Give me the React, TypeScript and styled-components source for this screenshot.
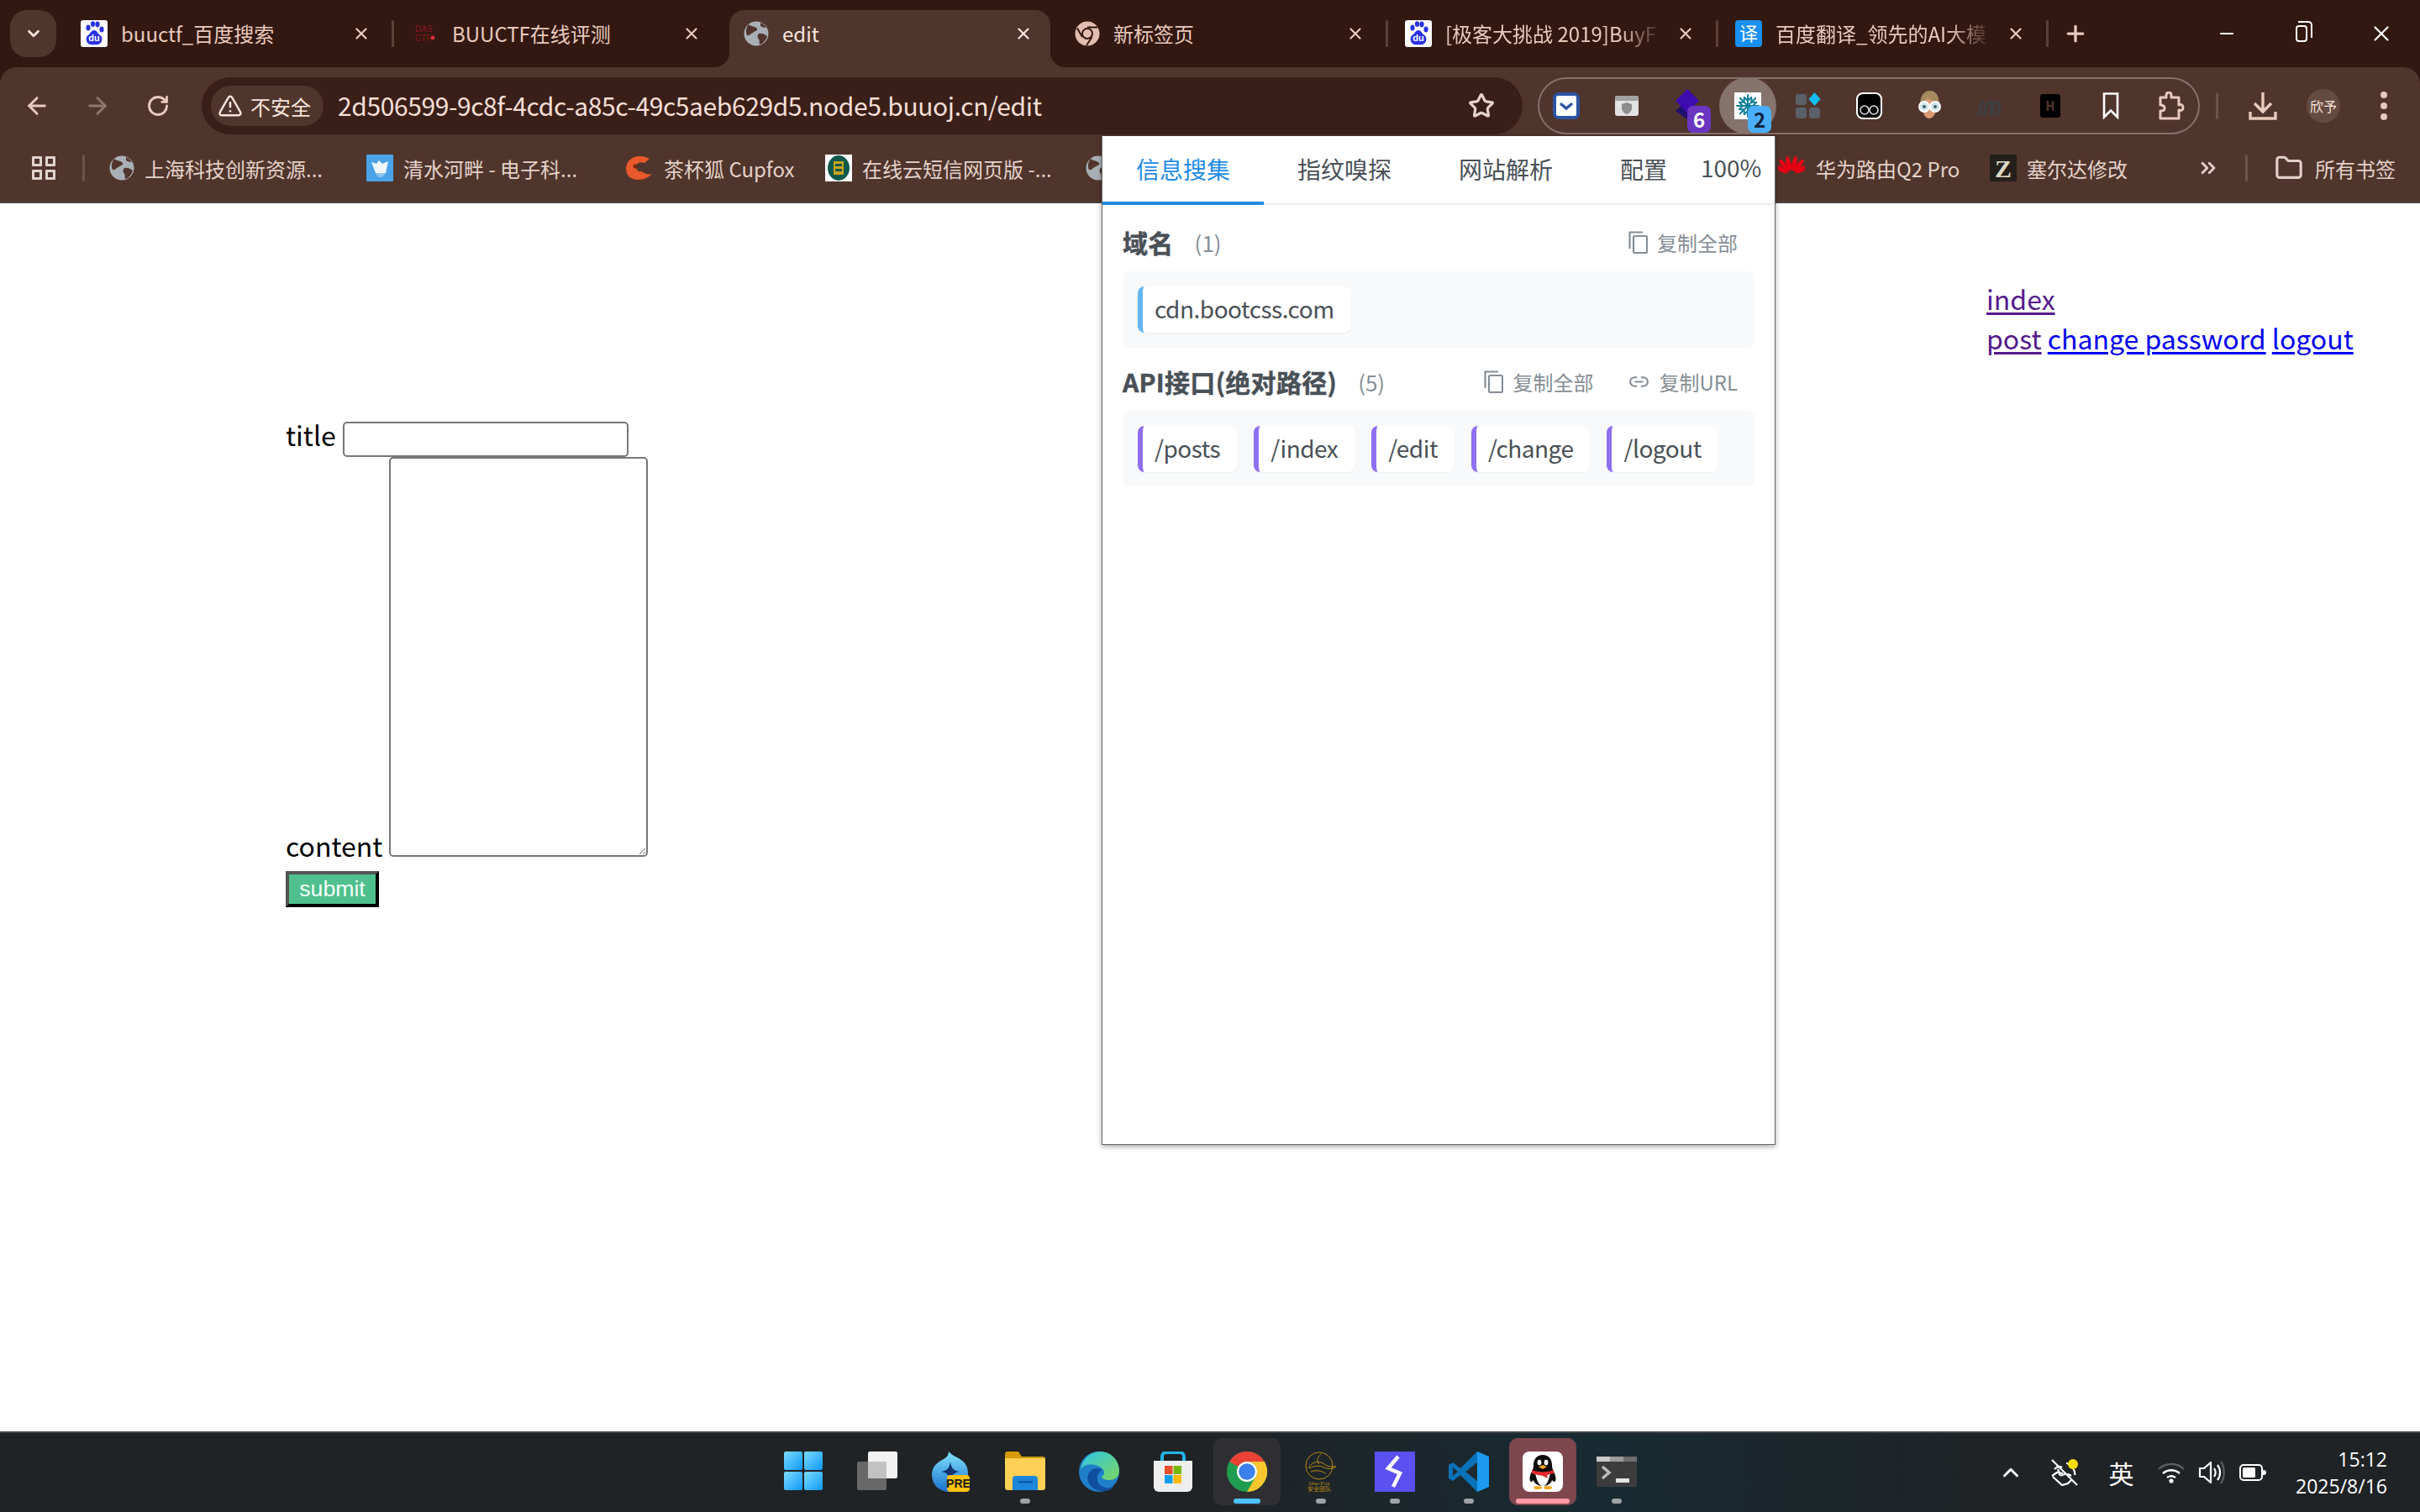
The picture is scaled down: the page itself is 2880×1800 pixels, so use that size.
import React from 'react';
import styled, { createGlobalStyle } from 'styled-components';
import {
  ArrowLeft, ArrowRight, RotateCw, TriangleAlert, Star, ChevronDown, ChevronUp,
  X, Plus, Minus, ChevronsRight, Folder, Link2,
} from 'lucide-react';

const CJK = '"Noto Sans CJK SC", "Noto Sans", sans-serif';
const STRIP = '#321810';
const BAR = '#50352d';
const INK = '#e9cabd';

const GlobalStyle = createGlobalStyle`
  html, body { margin: 0; padding: 0; background: #fff; }
  body { font-family: ${CJK}; }
  * { box-sizing: border-box; }
`;

const Screen = styled.div`
  position: relative;
  width: 2880px;
  height: 1800px;
  display: flex;
  flex-direction: column;
  overflow: hidden;
`;

/* ---------- tab strip ---------- */
const TabStrip = styled.div`
  height: 80px;
  flex: none;
  display: flex;
  background: ${STRIP};
  padding-left: 12px;
`;
const TabMenu = styled.div`
  width: 55px;
  height: 56px;
  margin: 12px 5px 0 0;
  border-radius: 20px;
  background: ${BAR};
  color: #f4e3dc;
  display: flex;
  align-items: center;
  justify-content: center;
`;
const Tab = styled.div<{ $active?: boolean; $sep?: boolean }>`
  position: relative;
  width: 393px;
  height: 68px;
  margin-top: 12px;
  padding: 0 24px 12px 24px;
  display: flex;
  align-items: center;
  gap: 16px;
  color: ${(p) => (p.$active ? '#f7e6de' : INK)};
  font-size: 24px;
  border-radius: 18px 18px 0 0;
  background: ${(p) => (p.$active ? BAR : 'transparent')};
  ${(p) => p.$active && `
    margin-left: 10px;
    margin-right: 5px;
    width: 382px;
    padding-left: 17px;
    padding-right: 21px;
    &::before, &::after {
      content: '';
      position: absolute;
      bottom: 0;
      width: 18px;
      height: 18px;
    }
    &::before { left: -18px; background: radial-gradient(circle at 0 0, transparent 18px, ${BAR} 18.5px); }
    &::after { right: -18px; background: radial-gradient(circle at 100% 0, transparent 18px, ${BAR} 18.5px); }
  `}
  ${(p) => p.$sep && `
    &::after {
      content: '';
      position: absolute;
      right: -4px;
      top: 12px;
      width: 3px;
      height: 32px;
      border-radius: 2px;
      background: #5c4138;
    }
  `}
`;
const TabTitle = styled.span<{ $fade?: boolean }>`
  flex: 1;
  min-width: 0;
  white-space: nowrap;
  margin-top: -2px;
  ${(p) => p.$fade && `
    -webkit-mask-image: linear-gradient(to right, #000 80%, transparent 100%);
    mask-image: linear-gradient(to right, #000 80%, transparent 100%);
  `}
`;
const TabClose = styled.span`
  flex: none;
  width: 24px;
  margin-right: -1px;
  display: flex;
  justify-content: center;
`;
const NewTab = styled.div`
  width: 72px;
  margin-top: 12px;
  height: 56px;
  display: flex;
  align-items: center;
  justify-content: center;
  color: ${INK};
`;
const WindowControls = styled.div`
  margin-left: auto;
  display: flex;
  height: 56px;
  margin-top: 12px;
  color: #fff;
`;
const WinButton = styled.div`
  width: 92px;
  display: flex;
  align-items: center;
  justify-content: center;
`;
const RestoreGlyph = styled.span`
  position: relative;
  left: -3px;
  width: 14px;
  height: 20px;
  border: 2px solid #fff;
  border-radius: 4px;
  &::after {
    content: '';
    position: absolute;
    top: -7px;
    left: 1px;
    width: 15px;
    height: 18px;
    border-top: 2px solid #fff;
    border-right: 2px solid #fff;
    border-radius: 0 5px 0 0;
  }
`;

/* ---------- toolbar ---------- */
const ChromeBody = styled.div`
  background: ${STRIP};
  flex: none;
`;
const Toolbar = styled.div`
  height: 80px;
  background: ${BAR};
  border-radius: 20px 20px 0 0;
  display: flex;
  align-items: flex-start;
  padding: 12px 0 0 8px;
`;
const NavButton = styled.div<{ $dim?: boolean }>`
  width: 72px;
  height: 68px;
  display: flex;
  align-items: center;
  justify-content: center;
  color: ${(p) => (p.$dim ? '#8f766b' : INK)};
`;
const Omnibox = styled.div`
  width: 1572px;
  height: 68px;
  margin-left: 16px;
  border-radius: 34px;
  background: #3a1f18;
  display: flex;
  align-items: center;
  padding: 0 33px 0 11px;
`;
const SecurityChip = styled.div`
  width: 134px;
  height: 48px;
  flex: none;
  border-radius: 24px;
  background: ${BAR};
  display: flex;
  align-items: center;
  gap: 9px;
  padding-left: 8px;
  color: #f7e6de;
  font-size: 24px;
`;
const UrlText = styled.span`
  margin: -3px 0 0 17px;
  color: #f4dfd6;
  font-size: 30px;
  letter-spacing: -0.4px;
  white-space: nowrap;
  flex: 1;
`;
const ExtensionPill = styled.div`
  width: 788px;
  height: 68px;
  margin-left: 18px;
  border-radius: 34px;
  box-shadow: inset 0 0 0 2px #85726b;
  display: flex;
  gap: 4px;
`;
const ExtSlot = styled.div<{ $on?: boolean }>`
  position: relative;
  width: 68px;
  height: 68px;
  border-radius: 50%;
  background: ${(p) => (p.$on ? '#85736c' : 'transparent')};
  display: flex;
  align-items: center;
  justify-content: center;
  color: ${INK};
`;
const ExtBadge = styled.span<{ $bg: string; $fg: string }>`
  position: absolute;
  left: 34px;
  top: 34px;
  width: 28px;
  height: 32px;
  border-radius: 7px;
  background: ${(p) => p.$bg};
  color: ${(p) => p.$fg};
  font: 700 24px/31px ${CJK};
  text-align: center;
`;
const ToolbarRule = styled.span`
  width: 3px;
  height: 32px;
  margin: 18px 17px 0 19px;
  background: #6e5349;
  border-radius: 2px;
`;
const ToolButton = styled.div`
  width: 72px;
  height: 68px;
  display: flex;
  align-items: center;
  justify-content: center;
  color: ${INK};
`;
const ProfileBadge = styled.div`
  width: 40px;
  height: 40px;
  border-radius: 50%;
  background: #644a41;
  color: #f7e6de;
  font-size: 16px;
  display: flex;
  align-items: center;
  justify-content: center;
`;

/* ---------- bookmarks ---------- */
const BookmarkBar = styled.div`
  height: 82px;
  flex: none;
  background: ${BAR};
  border-bottom: 2px solid #4a4644;
  display: flex;
  align-items: center;
  padding: 0 28px 0 38px;
  color: #e4d2ca;
  font-size: 24px;
`;
const AppsGrid = styled.div`
  width: 28px;
  height: 28px;
  display: grid;
  grid-template-columns: 12px 12px;
  gap: 4px;
  & > i {
    border: 3px solid #e0d2cc;
    border-radius: 1px;
  }
`;
const BarRule = styled.span<{ $l: number; $r: number }>`
  width: 3px;
  height: 32px;
  margin: 0 ${(p) => p.$r}px 0 ${(p) => p.$l}px;
  background: #6e5349;
  border-radius: 2px;
`;
const BookmarkItem = styled.div<{ $w: number; $gap?: number }>`
  width: ${(p) => p.$w}px;
  flex: none;
  display: flex;
  align-items: center;
  gap: ${(p) => p.$gap ?? 12}px;
  white-space: nowrap;
`;
const BarRight = styled.div`
  margin-left: auto;
  display: flex;
  align-items: center;
`;

/* ---------- page ---------- */
const Page = styled.div`
  flex: 1;
  min-height: 0;
  display: flex;
  justify-content: space-between;
  background: #fff;
  color: #000;
  font-size: 32px;
`;
const PostForm = styled.form`
  padding: 252px 0 0 340px;
  line-height: 46px;
`;
const FormRow = styled.div`
  white-space: nowrap;
`;
const FieldLabel = styled.label`
  margin-right: 8px;
`;
const TitleInput = styled.input`
  width: 340px;
  height: 42px;
  padding: 2px 4px;
  border: 2px solid #767676;
  border-radius: 5px;
  background: #fff;
  font: 26.67px "Liberation Sans", Arial, sans-serif;
  outline: none;
`;
const ContentArea = styled.textarea`
  width: 308px;
  height: 476px;
  border: 2px solid #767676;
  border-radius: 5px;
  outline: none;
  display: inline-block;
`;
const SubmitButton = styled.button`
  display: block;
  margin-top: 8px;
  width: 111px;
  height: 43px;
  padding: 0;
  border: 4px outset #000;
  background: #4fc08d;
  color: #f4fff9;
  font: 26.67px/1 "Liberation Sans", Arial, sans-serif;
`;
const TopLinks = styled.div`
  padding: 90px 60px 0 0;
  width: 516px;
  line-height: 47px;
`;
const PageLink = styled.a<{ $seen?: boolean }>`
  color: ${(p) => (p.$seen ? '#551a8b' : '#0000ee')};
  text-decoration: underline;
  text-decoration-thickness: 3px;
  text-underline-offset: 3px;
`;

/* ---------- popup ---------- */
const Popup = styled.div`
  position: absolute;
  left: 1311px;
  top: 162px;
  width: 802px;
  height: 1201px;
  background: #fff;
  border: 1px solid #666;
  border-top: none;
  box-shadow: 0 2px 6px rgba(0, 0, 0, 0.35);
  color: #495057;
  font-family: ${CJK};
`;
const PopupTabs = styled.div`
  height: 82px;
  display: flex;
  border-bottom: 2px solid #e9ecef;
`;
const PopupTab = styled.div<{ $active?: boolean; $w: number }>`
  width: ${(p) => p.$w}px;
  height: 82px;
  padding-top: 18px;
  text-align: center;
  font-size: 28px;
  line-height: 42px;
  color: ${(p) => (p.$active ? '#228be6' : '#495057')};
  border-bottom: 4px solid ${(p) => (p.$active ? '#228be6' : 'transparent')};
`;
const ZoomLevel = styled.div`
  font-size: 28px;
  line-height: 42px;
  padding-top: 16px;
  color: #495057;
`;
const PopupBody = styled.div`
  padding: 24px 24px 0;
`;
const SectionHead = styled.div`
  height: 44px;
  padding-bottom: 4px;
  display: flex;
  align-items: center;
`;
const SectionTitle = styled.h3`
  margin: 0;
  font-size: 30px;
  font-weight: 700;
  letter-spacing: 0.3px;
  color: #495057;
  -webkit-text-stroke: 0.5px #495057;
`;
const SectionCount = styled.span`
  margin-left: 25px;
  font-size: 26px;
  color: #868e96;
`;
const HeadActions = styled.div`
  margin-left: auto;
  display: flex;
  gap: 42px;
  padding-right: 20px;
`;
const CopyAction = styled.span`
  display: flex;
  align-items: center;
  gap: 11px;
  font-size: 24px;
  color: #868e96;
`;
const ChipBox = styled.div`
  height: 91px;
  margin: 11px 0 20px;
  padding: 18px;
  background: #f8f9fa;
  border-radius: 8px;
  display: flex;
  gap: 20px;
`;
const Chip = styled.span<{ $accent: string }>`
  height: 55px;
  padding: 0 20px 0 14px;
  background: #fff;
  border-left: 6px solid ${(p) => p.$accent};
  border-radius: 8px;
  box-shadow: 0 1px 2px rgba(0, 0, 0, 0.05);
  font-size: 28px;
  letter-spacing: -0.5px;
  line-height: 52px;
  color: #495057;
`;

/* ---------- taskbar ---------- */
const Taskbar = styled.div`
  height: 96px;
  flex: none;
  border-top: 2px solid #43474a;
  background: linear-gradient(90deg, #1f2326 0%, #1f2326 50%, #182a32 66%, #1f2326 82%);
  display: grid;
  grid-template-columns: 1fr auto 1fr;
  color: #fff;
`;
const TaskIcons = styled.div`
  grid-column: 2;
  display: flex;
  gap: 8px;
  padding-top: 6px;
`;
const TaskSlot = styled.div<{ $tone?: 'open' | 'alert' }>`
  position: relative;
  width: 80px;
  height: 80px;
  border-radius: 10px;
  display: flex;
  align-items: flex-start;
  justify-content: center;
  padding-top: 16px;
  background: ${(p) => (p.$tone === 'open' ? '#2f2f33' : p.$tone === 'alert' ? '#7e464d' : 'transparent')};
`;
const RunDot = styled.span<{ $w?: number; $c?: string }>`
  position: absolute;
  left: 50%;
  bottom: 2px;
  transform: translateX(-50%);
  width: ${(p) => p.$w ?? 12}px;
  height: 6px;
  border-radius: 3px;
  background: ${(p) => p.$c ?? '#9ea3a6'};
`;
const Tray = styled.div`
  grid-column: 3;
  display: flex;
  align-items: center;
  justify-content: flex-end;
  padding-right: 39px;
`;
const TrayItem = styled.div<{ $w: number }>`
  position: relative;
  width: ${(p) => p.$w}px;
  display: flex;
  justify-content: center;
  font-size: 30px;
`;
const TrayDot = styled.span`
  position: absolute;
  top: 0;
  left: 36px;
  width: 12px;
  height: 12px;
  border-radius: 50%;
  background: #ffdd00;
`;
const Clock = styled.div`
  margin-left: 23px;
  width: 112px;
  text-align: right;
  font: 23px/32px "Open Sans", "Noto Sans", sans-serif;
`;

/* ---------- drawn icons ---------- */
type Sz = { s?: number };

const BaiduIcon = ({ s = 32 }: Sz) => (
  <svg width={s} height={s} viewBox="0 0 32 32" style={{ flex: 'none' }}>
    <rect width="32" height="32" rx="3" fill="#fff" />
    <g fill="#2932e1">
      <ellipse cx="9" cy="9" rx="2.6" ry="3.6" />
      <ellipse cx="14.5" cy="4.6" rx="2.6" ry="3.4" />
      <ellipse cx="20" cy="5" rx="2.6" ry="3.4" />
      <ellipse cx="25" cy="11" rx="2.6" ry="3.6" />
      <path d="M16 12c3 0 4 3 6 5 3 2 4 4 3 8-1 3-4 5-9 4-5 1-8-1-9-4-1-4 0-6 3-8 2-2 3-5 6-5z" />
    </g>
    <text x="16" y="25" textAnchor="middle" fontSize="11" fontWeight="700" fontFamily="Liberation Sans" fill="#fff">du</text>
  </svg>
);
const DasIcon = () => (
  <svg width="33" height="32" viewBox="-5 0 33 32" style={{ flex: 'none' }}>
    <text x="0" y="14" fontSize="10" fontFamily="Liberation Sans" fill="#8c1522">DAS</text>
    <text x="0" y="25" fontSize="10" fontFamily="Liberation Sans" fill="#8c1522">CTF</text>
    <circle cx="21" cy="21" r="2.4" fill="#d8313c" />
  </svg>
);
const GlobeIcon = ({ s = 30 }: Sz) => (
  <svg width={s} height={s} viewBox="0 0 30 30" style={{ flex: 'none' }}>
    <circle cx="15" cy="15" r="14.5" fill="#a9b0b5" />
    <path d="M6 4c3 3 8 2 10 5 1 3-3 3-5 5-3 1-4 4-7 3-2-4-1-10 2-13zM18 15c4-1 7 1 10 3-1 4-4 8-8 10-3-1 0-4-2-6-2-3-2-5 0-7zM20 2c3 1 5 3 7 6-3 0-5-1-7-2z" fill="#51352d" />
  </svg>
);
const ChromeMono = () => (
  <svg width="30" height="30" viewBox="0 0 30 30" style={{ flex: 'none' }}>
    <circle cx="15" cy="15" r="14.5" fill="#e3bdb0" />
    <path d="M15 7.5h12.4M9 19 3 8.6M20.4 19.5 14 29" stroke={STRIP} strokeWidth="2" fill="none" />
    <circle cx="15" cy="15" r="7" fill={STRIP} />
    <circle cx="15" cy="15" r="5" fill="#e3bdb0" />
  </svg>
);
const TranslateIcon = () => (
  <svg width="32" height="32" viewBox="0 0 32 32" overflow="visible" style={{ flex: 'none' }}>
    <rect width="32" height="32" rx="4" fill="#1890f0" />
    <text x="16" y="24" textAnchor="middle" fontSize="22" fontFamily="Noto Sans CJK SC" fill="#fff">译</text>
  </svg>
);
const BoatIcon = () => (
  <svg width="32" height="32" viewBox="0 0 32 32" style={{ flex: 'none' }}>
    <rect width="32" height="32" fill="#4aa3e8" />
    <path d="M6 9l6 2 3-4 4 4 7-3-3 14H11z" fill="#f1f6fa" />
    <path d="M11 22h12l-4 5h-5z" fill="#8cc4ee" />
  </svg>
);
const CupfoxIcon = () => (
  <svg width="34" height="32" viewBox="0 0 34 32" style={{ flex: 'none' }}>
    <path d="M17 2C7 2 1 9 1 17s6 13 14 13c7 0 12-2 17-7-5 1-9 0-12-3-3 1-7-1-7-5 0-5 5-7 10-5l6-5C25 3 21 2 17 2z" fill="#e8582a" />
    <circle cx="12" cy="14" r="2.5" fill="#7a2a10" />
  </svg>
);
const SmsIcon = () => (
  <svg width="32" height="32" viewBox="0 0 32 32" style={{ flex: 'none' }}>
    <rect width="32" height="32" fill="#fff" />
    <ellipse cx="16" cy="16" rx="13" ry="15" fill="#0f5a4d" />
    <rect x="10" y="8" width="12" height="16" fill="#c9a318" />
    <rect x="12" y="11" width="8" height="3" fill="#0f5a4d" />
    <rect x="12" y="17" width="8" height="3" fill="#0f5a4d" />
  </svg>
);
const HuaweiIcon = () => (
  <svg width="32" height="32" viewBox="0 0 32 32" style={{ flex: 'none' }}>
    <g fill="#e60012">
      {[-62, -38, -14, 14, 38, 62].map((a) => (
        <ellipse key={a} cx="16" cy="10" rx="2.8" ry="9" transform={`rotate(${a} 16 24)`} />
      ))}
    </g>
  </svg>
);
const ZeldaIcon = () => (
  <svg width="32" height="32" viewBox="0 0 32 32" style={{ flex: 'none' }}>
    <rect width="32" height="32" fill="#241f1b" />
    <text x="16" y="27" textAnchor="middle" fontSize="30" fontWeight="700" fontFamily="Liberation Serif" fill="#dcd8c4">Z</text>
  </svg>
);
const PocketIcon = () => (
  <svg width="32" height="32" viewBox="0 0 32 32">
    <rect width="32" height="32" rx="7" fill="#2b54a4" />
    <rect x="4" y="4" width="24" height="24" rx="2" fill="#fff" />
    <path d="M10 14l6 5 6-5" stroke="#2b54a4" strokeWidth="3.4" fill="none" strokeLinecap="round" />
  </svg>
);
const ShieldTile = () => (
  <svg width="28" height="24" viewBox="0 0 28 24">
    <rect width="28" height="24" rx="3" fill="#e2e2e2" />
    <rect width="28" height="6" rx="2" fill="#a2a2a2" />
    <path d="M14 8l6 2v5c0 3-3 6-6 7-3-1-6-4-6-7v-5z" fill="#8d8d8d" />
  </svg>
);
const DiamondStack = () => (
  <svg width="32" height="36" viewBox="0 0 32 36" style={{ marginTop: -4 }}>
    <path d="M16 14l14 12-14 10L2 26z" fill="#1f0f6e" />
    <path d="M16 0l14 14-14 14L2 14z" fill="#3d0bb0" />
  </svg>
);
const SnowflakeTile = () => (
  <svg width="32" height="32" viewBox="0 0 32 32">
    <rect width="32" height="32" fill="#fff" />
    <g stroke="#14809a" strokeWidth="2" strokeLinecap="round">
      {[0, 45, 90, 135].map((a) => (
        <path key={a} d="M16 3v26M12 6l4 4 4-4M12 26l4-4 4 4" fill="none" transform={`rotate(${a} 16 16)`} />
      ))}
    </g>
  </svg>
);
const BlocksIcon = () => (
  <svg width="30" height="32" viewBox="0 0 30 32">
    <rect x="0" y="2" width="13" height="13" rx="3" fill="#5a6068" />
    <rect x="0" y="18" width="13" height="13" rx="3" fill="#5a6068" />
    <rect x="16" y="18" width="13" height="13" rx="3" fill="#5a6068" />
    <path d="M22.5 0l7 8-7 8-7-8z" fill="#12bdf2" />
  </svg>
);
const GlassesIcon = () => (
  <svg width="31" height="32" viewBox="0 0 31 32">
    <rect x="1" y="1" width="29" height="30" rx="7" fill="#000" stroke="#fff" strokeWidth="2" />
    <circle cx="10" cy="21" r="5" fill="none" stroke="#e4e4e4" strokeWidth="1.5" />
    <circle cx="21" cy="21" r="5" fill="none" stroke="#e4e4e4" strokeWidth="1.5" />
  </svg>
);
const AvatarIcon = () => (
  <svg width="32" height="36" viewBox="0 0 32 36" style={{ marginTop: -2 }}>
    <path d="M5 18C5 7 10 1 17 1s11 7 11 17l-2 6H7z" fill="#a58a5f" />
    <path d="M8 20c0-5 3-8 7-10 3 2 7 4 10 7 0 10-4 17-9 17s-8-6-8-14z" fill="#d99a72" />
    <circle cx="10" cy="20" r="6" fill="#cfe6ea" stroke="#fff" strokeWidth="2" />
    <circle cx="23" cy="20" r="6" fill="#cfe6ea" stroke="#fff" strokeWidth="2" />
    <circle cx="10" cy="20" r="2" fill="#45606a" />
    <circle cx="23" cy="20" r="2" fill="#45606a" />
  </svg>
);
const HBlock = () => (
  <svg width="24" height="28" viewBox="0 0 24 28">
    <rect width="24" height="28" rx="3" fill="#000" />
    <path d="M9 8v12M15 8v12M9 14h6" stroke="#50352d" strokeWidth="2.4" fill="none" />
  </svg>
);
const MarkIcon = () => (
  <svg width="32" height="28" viewBox="0 0 32 28">
    <path d="M3 26l4-18M9 26l3-13c1-4 7-5 7 0l-3 13M18 26l3-13c1-4 7-5 7 0l-3 13" fill="none" stroke="#403f40" strokeWidth="4" />
  </svg>
);
const RibbonIcon = () => (
  <svg width="20" height="32" viewBox="0 0 20 32">
    <path d="M2 1.500h16v28l-8-8-8 8z" fill="none" stroke="#fff" strokeWidth="2.600" />
  </svg>
);
const ExtensionIcon = () => (
  <svg width="32" height="34" viewBox="0 0 32 34" fill="none" stroke="#e9cabd" strokeWidth="3" strokeLinejoin="round">
    <path d="M3 7h7V4a3 3 0 0 1 6 0v3h9v9c3-1 5 0 5 3s-2 4-5 3v10H3V23c4 0 5-1 5-3s-1-4-5-4z" />
  </svg>
);
const DownloadArrow = () => (
  <svg width="34" height="34" viewBox="0 0 34 34" fill="none" stroke="#e9cabd" strokeWidth="3.400">
    <path d="M17 1v22M7 14l10 10 10-10M2 24v8h30v-8" />
  </svg>
);
const DotsIcon = () => (
  <svg width="10" height="36" viewBox="0 0 10 36" fill="#e6c9bd">
    <circle cx="5" cy="5" r="4" />
    <circle cx="5" cy="18" r="4" />
    <circle cx="5" cy="31" r="4" />
  </svg>
);
const CopyGlyph = () => (
  <svg width="23" height="27" viewBox="0 0 23 27" fill="none" stroke="#868e96" strokeWidth="2.200" style={{ flex: 'none' }}>
    <path d="M1.500 21V1.500H17" />
    <rect x="6" y="6" width="16" height="20" rx="1.500" />
  </svg>
);

const StartIcon = () => (
  <svg width="46" height="46" viewBox="0 0 46 46">
    <defs>
      <linearGradient id="startFill" x1="0" y1="0" x2="1" y2="1">
        <stop offset="0" stopColor="#7adcff" />
        <stop offset="1" stopColor="#1098f7" />
      </linearGradient>
    </defs>
    <rect x="0" y="0" width="22" height="22" rx="2" fill="url(#startFill)" />
    <rect x="24" y="0" width="22" height="22" rx="2" fill="url(#startFill)" />
    <rect x="0" y="24" width="22" height="22" rx="2" fill="url(#startFill)" />
    <rect x="24" y="24" width="22" height="22" rx="2" fill="url(#startFill)" />
  </svg>
);
const TaskViewIcon = () => (
  <svg width="48" height="46" viewBox="0 0 48 46">
    <rect x="13" y="0" width="35" height="32" rx="2" fill="#f2f2f2" />
    <rect x="0" y="12" width="35" height="34" rx="2" fill="#6f6f6f" opacity="0.92" />
    <rect x="13" y="12" width="22" height="20" fill="#c2c2c2" />
  </svg>
);
const CopilotIcon = () => (
  <svg width="46" height="48" viewBox="0 0 46 48">
    <defs>
      <linearGradient id="copFill" x1="0" y1="0" x2="0" y2="1">
        <stop offset="0" stopColor="#7fe4fb" />
        <stop offset="1" stopColor="#1a6fd0" />
      </linearGradient>
    </defs>
    <path d="M20 0c2 3 6 5 12 8 8 5 11 10 11 18 0 12-8 22-21 22C9 48 0 40 0 27 0 17 8 12 14 9c4-2 6-5 6-9z" fill="url(#copFill)" />
    <path d="M22 12c1 8 4 11 11 12-7 1-10 4-11 12-1-8-4-11-11-12 7-1 10-4 11-12z" fill="#12316e" />
    <rect x="18" y="28" width="27" height="20" rx="4" fill="#ffc20e" />
    <text x="31.5" y="43" textAnchor="middle" fontSize="14" fontWeight="700" fontFamily="Liberation Sans" fill="#1b1b1b">PRE</text>
  </svg>
);
const FolderIcon = () => (
  <svg width="48" height="46" viewBox="0 0 48 46">
    <path d="M0 3a3 3 0 0 1 3-3h13l4 6h25a3 3 0 0 1 3 3v10H0z" fill="#d49a08" />
    <path d="M0 8h48v35a3 3 0 0 1-3 3H3a3 3 0 0 1-3-3z" fill="#ffd056" />
    <path d="M9 33a4 4 0 0 1 4-4h22a4 4 0 0 1 4 4v13H9z" fill="#1c86d8" />
    <rect x="16" y="35" width="17" height="2.4" fill="#0a5aa8" />
  </svg>
);
const EdgeIcon = () => (
  <svg width="48" height="48" viewBox="0 0 48 48">
    <defs>
      <linearGradient id="edgeA" x1="0" y1="0" x2="1" y2="1">
        <stop offset="0" stopColor="#2ec5e8" />
        <stop offset="1" stopColor="#7ad65f" />
      </linearGradient>
    </defs>
    <circle cx="24" cy="24" r="24" fill="#1f7fc9" />
    <path d="M2 22C4 8 14 0 25 0c13 0 23 10 23 23 0 8-6 11-12 11-5 0-9-2-9-4 3-2 4-5 2-8C25 15 6 12 2 22z" fill="url(#edgeA)" />
    <path d="M22 20C12 20 8 30 12 38c3 6 11 10 20 9 4-1 7-2 9-5-9 3-18 0-19-8-1-6 2-10 6-12-2-1-4-2-6-2z" fill="#0f4f9d" />
  </svg>
);
const StoreIcon = () => (
  <svg width="46" height="48" viewBox="0 0 46 48">
    <path d="M10 12V6a5 5 0 0 1 5-5h16a5 5 0 0 1 5 5v6" fill="none" stroke="#22b4ea" strokeWidth="4" />
    <path d="M0 11h46v31a6 6 0 0 1-6 6H6a6 6 0 0 1-6-6z" fill="#eeeeee" />
    <rect x="13" y="17" width="9.500" height="10" fill="#e8502c" />
    <rect x="23.500" y="17" width="9.500" height="10" fill="#7ab800" />
    <rect x="13" y="28" width="9.500" height="10" fill="#0f9de8" />
    <rect x="23.500" y="28" width="9.500" height="10" fill="#ffba00" />
  </svg>
);
const ChromeIcon = () => (
  <svg width="48" height="48" viewBox="0 0 48 48">
    <circle cx="24" cy="24" r="24" fill="#1f9d50" />
    <path d="M24 0a24 24 0 0 1 20.800 12H24a12 12 0 0 0-10.400 6L3.200 12A24 24 0 0 1 24 0z" fill="#ea4335" />
    <path d="M44.800 12A24 24 0 0 1 24 48l10.400-18A12 12 0 0 0 24 12z" fill="#fdc62f" />
    <circle cx="24" cy="24" r="12" fill="#fff" />
    <circle cx="24" cy="24" r="9.800" fill="#3b82ec" />
  </svg>
);
const OnePadIcon = () => (
  <svg width="44" height="48" viewBox="0 0 44 48" fill="none" stroke="#b88a12" strokeWidth="1">
    <circle cx="20" cy="17" r="16" />
    <path d="M8 18c6-8 14-6 18-3 4 3 8 3 14 3-4 3-10 3-14 1-6-3-12-2-18 1zM10 24c8-3 14 0 18 2M22 3c-4 4-6 8-2 12" />
    <text x="20" y="40" textAnchor="middle" fontSize="7" fontFamily="Liberation Serif" fill="#b88a12" stroke="none">One-Fox</text>
    <text x="20" y="47" textAnchor="middle" fontSize="7" fontFamily="Noto Sans CJK SC" fill="#b88a12" stroke="none">安全团队</text>
  </svg>
);
const ZapIcon = () => (
  <svg width="48" height="48" viewBox="0 0 48 48">
    <rect width="48" height="48" fill="#5b50f0" />
    <path d="M28 6L16 20l14 6-8 16" fill="none" stroke="#fff" strokeWidth="4.500" />
  </svg>
);
const VsCodeIcon = () => (
  <svg width="48" height="48" viewBox="0 0 48 48">
    <path d="M34 0l14 6v36l-14 6L14 28 5 35l-5-3V16l5-3 9 7z" fill="#0a72b8" />
    <path d="M34 0l14 6v36l-14 6z" fill="#1d9bf0" />
    <path d="M34 13v22L20 24z" fill="#1f2a30" />
    <path d="M5 19l6 5-6 5z" fill="#1f2a30" />
  </svg>
);
const QqIcon = () => (
  <svg width="48" height="48" viewBox="0 0 48 48">
    <rect width="48" height="48" rx="8" fill="#fff" />
    <path d="M24 4c-7 0-11 5-11 12 0 4-1 6-3 10-2 5-2 9 0 10 1 0 2-1 3-2 1 4 5 7 11 7s10-3 11-7c1 1 2 2 3 2 2-1 2-5 0-10-2-4-3-6-3-10 0-7-4-12-11-12z" fill="#0c0c0c" />
    <path d="M15 26c2 8 4 15 9 15s7-7 9-15z" fill="#fff" />
    <ellipse cx="20" cy="13" rx="2.400" ry="3.200" fill="#fff" />
    <ellipse cx="28" cy="13" rx="2.400" ry="3.200" fill="#fff" />
    <path d="M19 18l5-2 5 2-5 3z" fill="#f5a623" />
    <path d="M11 22c8 3 18 3 26 0v4l-8 2 1 4-6-3-10-2-3-1z" fill="#e3282c" />
    <ellipse cx="18" cy="43" rx="5" ry="2" fill="#f5a623" />
    <ellipse cx="30" cy="43" rx="5" ry="2" fill="#f5a623" />
  </svg>
);
const TerminalIcon = () => (
  <svg width="48" height="36" viewBox="0 0 48 36" style={{ marginTop: 6 }}>
    <rect width="48" height="36" rx="2" fill="#3c3c3c" />
    <rect width="16" height="6" fill="#c9c9c9" />
    <rect x="16" width="16" height="6" fill="#9c9c9c" />
    <rect x="32" width="16" height="6" fill="#6e6e6e" />
    <path d="M7 12l8 7-8 7" stroke="#bcbcbc" strokeWidth="3.400" fill="none" />
    <rect x="23" y="26" width="16" height="5" fill="#e4e4e4" />
  </svg>
);
const SecurityOffIcon = () => (
  <svg width="32" height="32" viewBox="0 0 32 32" fill="none" stroke="#fff" strokeWidth="2.200">
    <path d="M1 1l30 30" />
    <path d="M4 12c3-3 6-4 9-2M18 5c3 0 6 4 8 6 2 3 3 5 2 8M1 20l6-4 7 1M2 21l11 10 7-2 4-4" />
    <path d="M12 20c3-3 8-3 12 0M8 12l3 8" />
  </svg>
);
const WifiGlyph = () => (
  <svg width="32" height="26" viewBox="0 0 32 26" fill="none" strokeWidth="2.400">
    <path d="M1 9C9 1 23 1 31 9" stroke="#5a5d60" />
    <path d="M6 14c6-5 14-5 20 0M11 19c3-2 7-2 10 0" stroke="#fff" />
    <circle cx="16" cy="23" r="2.600" fill="#fff" />
  </svg>
);
const VolumeGlyph = () => (
  <svg width="32" height="30" viewBox="0 0 32 30" fill="none" strokeWidth="2.200">
    <path d="M2 10h5l8-7v24l-8-7H2z" stroke="#fff" strokeLinejoin="round" />
    <path d="M19 10c2 3 2 7 0 10M23 6c4 5 4 13 0 18" stroke="#fff" />
    <path d="M27 2c5 7 5 19 0 26" stroke="#5a5d60" />
  </svg>
);
const BatteryIcon = () => (
  <svg width="32" height="20" viewBox="0 0 32 20">
    <rect x="1" y="1" width="26" height="18" rx="4" fill="none" stroke="#fff" strokeWidth="2" />
    <rect x="4" y="4" width="15" height="12" rx="1.500" fill="#fff" />
    <path d="M28 7h1a3 3 0 0 1 0 6h-1z" fill="#fff" />
  </svg>
);

/* ---------- data ---------- */
const apiPaths = ['/posts', '/index', '/edit', '/change', '/logout'];
const taskIcons: { icon: React.ReactNode; dot?: boolean; tone?: 'open' | 'alert'; bar?: [number, string] }[] = [
  { icon: <StartIcon /> },
  { icon: <TaskViewIcon /> },
  { icon: <CopilotIcon /> },
  { icon: <FolderIcon />, dot: true },
  { icon: <EdgeIcon /> },
  { icon: <StoreIcon /> },
  { icon: <ChromeIcon />, tone: 'open', bar: [32, '#4cc2ff'] },
  { icon: <OnePadIcon />, dot: true },
  { icon: <ZapIcon />, dot: true },
  { icon: <VsCodeIcon />, dot: true },
  { icon: <QqIcon />, tone: 'alert', bar: [64, '#ff9aa6'] },
  { icon: <TerminalIcon />, dot: true },
];

export default function App() {
  return (
    <Screen>
      <GlobalStyle />
      <TabStrip>
        <TabMenu><ChevronDown size={22} strokeWidth={3} /></TabMenu>
        <Tab $sep>
          <BaiduIcon />
          <TabTitle>buuctf_百度搜索</TabTitle>
          <TabClose><X size={22} strokeWidth={2.4} /></TabClose>
        </Tab>
        <Tab>
          <DasIcon />
          <TabTitle>BUUCTF在线评测</TabTitle>
          <TabClose><X size={22} strokeWidth={2.4} /></TabClose>
        </Tab>
        <Tab $active>
          <GlobeIcon />
          <TabTitle>edit</TabTitle>
          <TabClose><X size={22} strokeWidth={2.4} /></TabClose>
        </Tab>
        <Tab $sep>
          <ChromeMono />
          <TabTitle>新标签页</TabTitle>
          <TabClose><X size={22} strokeWidth={2.4} /></TabClose>
        </Tab>
        <Tab $sep>
          <BaiduIcon />
          <TabTitle $fade>[极客大挑战 2019]BuyF</TabTitle>
          <TabClose><X size={22} strokeWidth={2.4} /></TabClose>
        </Tab>
        <Tab $sep>
          <TranslateIcon />
          <TabTitle $fade>百度翻译_领先的AI大模</TabTitle>
          <TabClose><X size={22} strokeWidth={2.4} /></TabClose>
        </Tab>
        <NewTab><Plus size={30} strokeWidth={2.6} /></NewTab>
        <WindowControls>
          <WinButton><Minus size={24} strokeWidth={2.2} /></WinButton>
          <WinButton><RestoreGlyph /></WinButton>
          <WinButton><X size={30} strokeWidth={1.8} /></WinButton>
        </WindowControls>
      </TabStrip>

      <ChromeBody>
        <Toolbar>
          <NavButton><ArrowLeft size={32} strokeWidth={2.2} /></NavButton>
          <NavButton $dim><ArrowRight size={32} strokeWidth={2.2} /></NavButton>
          <NavButton><RotateCw size={28} strokeWidth={2.4} /></NavButton>
          <Omnibox>
            <SecurityChip>
              <TriangleAlert size={30} strokeWidth={2} />
              <span>不安全</span>
            </SecurityChip>
            <UrlText>2d506599-9c8f-4cdc-a85c-49c5aeb629d5.node5.buuoj.cn/edit</UrlText>
            <Star size={32} strokeWidth={2.4} color="#e6d3cb" />
          </Omnibox>
          <ExtensionPill>
            <ExtSlot><PocketIcon /></ExtSlot>
            <ExtSlot><ShieldTile /></ExtSlot>
            <ExtSlot><DiamondStack /><ExtBadge $bg="#6a35c0" $fg="#fff">6</ExtBadge></ExtSlot>
            <ExtSlot $on><SnowflakeTile /><ExtBadge $bg="#4aaeff" $fg="#10233a">2</ExtBadge></ExtSlot>
            <ExtSlot><BlocksIcon /></ExtSlot>
            <ExtSlot><GlassesIcon /></ExtSlot>
            <ExtSlot><AvatarIcon /></ExtSlot>
            <ExtSlot><MarkIcon /></ExtSlot>
            <ExtSlot><HBlock /></ExtSlot>
            <ExtSlot><RibbonIcon /></ExtSlot>
            <ExtSlot><ExtensionIcon /></ExtSlot>
          </ExtensionPill>
          <ToolbarRule />
          <ToolButton><DownloadArrow /></ToolButton>
          <ToolButton><ProfileBadge>欣予</ProfileBadge></ToolButton>
          <ToolButton><DotsIcon /></ToolButton>
        </Toolbar>
      </ChromeBody>

      <BookmarkBar>
        <AppsGrid><i /><i /><i /><i /></AppsGrid>
        <BarRule $l={32} $r={29} />
        <BookmarkItem $w={306}><GlobeIcon />上海科技创新资源...</BookmarkItem>
        <BookmarkItem $w={308}><BoatIcon />清水河畔 - 电子科...</BookmarkItem>
        <BookmarkItem $w={238}><CupfoxIcon />茶杯狐 Cupfox</BookmarkItem>
        <BookmarkItem $w={310}><SmsIcon />在线云短信网页版 -...</BookmarkItem>
        <BookmarkItem $w={824}><GlobeIcon /></BookmarkItem>
        <BookmarkItem $w={252} $gap={13}><HuaweiIcon />华为路由Q2 Pro</BookmarkItem>
        <BookmarkItem $w={164}><ZeldaIcon />塞尔达修改</BookmarkItem>
        <BarRight>
          <ChevronsRight size={28} strokeWidth={2.4} />
          <BarRule $l={30} $r={32} />
          <BookmarkItem $w={145} $gap={14}><Folder size={34} strokeWidth={2.2} />所有书签</BookmarkItem>
        </BarRight>
      </BookmarkBar>

      <Page>
        <PostForm>
          <FormRow>
            <FieldLabel>title</FieldLabel>
            <TitleInput type="text" />
          </FormRow>
          <FormRow>
            <FieldLabel>content</FieldLabel>
            <ContentArea />
          </FormRow>
          <SubmitButton type="button">submit</SubmitButton>
        </PostForm>
        <TopLinks>
          <PageLink $seen href="#">index</PageLink>
          <br />
          <PageLink $seen href="#">post</PageLink>{' '}
          <PageLink href="#">change password</PageLink>{' '}
          <PageLink href="#">logout</PageLink>
        </TopLinks>
      </Page>

      <Taskbar>
        <TaskIcons>
          {taskIcons.map((t, i) => (
            <TaskSlot key={i} $tone={t.tone}>
              {t.icon}
              {t.dot && <RunDot />}
              {t.bar && <RunDot $w={t.bar[0]} $c={t.bar[1]} />}
            </TaskSlot>
          ))}
        </TaskIcons>
        <Tray>
          <TrayItem $w={64}><ChevronUp size={30} strokeWidth={2.4} /></TrayItem>
          <TrayItem $w={64}><SecurityOffIcon /><TrayDot /></TrayItem>
          <TrayItem $w={71}>英</TrayItem>
          <TrayItem $w={48}><WifiGlyph /></TrayItem>
          <TrayItem $w={48}><VolumeGlyph /></TrayItem>
          <TrayItem $w={50}><BatteryIcon /></TrayItem>
          <Clock>15:12<br />2025/8/16</Clock>
        </Tray>
      </Taskbar>

      <Popup>
        <PopupTabs>
          <PopupTab $active $w={192}>信息搜集</PopupTab>
          <PopupTab $w={192}>指纹嗅探</PopupTab>
          <PopupTab $w={192}>网站解析</PopupTab>
          <PopupTab $w={136}>配置</PopupTab>
          <ZoomLevel>100%</ZoomLevel>
        </PopupTabs>
        <PopupBody>
          <SectionHead>
            <SectionTitle>域名</SectionTitle>
            <SectionCount>(1)</SectionCount>
            <HeadActions>
              <CopyAction><CopyGlyph />复制全部</CopyAction>
            </HeadActions>
          </SectionHead>
          <ChipBox>
            <Chip $accent="#64b5f6">cdn.bootcss.com</Chip>
          </ChipBox>
          <SectionHead>
            <SectionTitle>API接口(绝对路径)</SectionTitle>
            <SectionCount>(5)</SectionCount>
            <HeadActions>
              <CopyAction><CopyGlyph />复制全部</CopyAction>
              <CopyAction><Link2 size={25} strokeWidth={2} />复制URL</CopyAction>
            </HeadActions>
          </SectionHead>
          <ChipBox>
            {apiPaths.map((p) => (
              <Chip key={p} $accent="#8f6ff2">{p}</Chip>
            ))}
          </ChipBox>
        </PopupBody>
      </Popup>
    </Screen>
  );
}
